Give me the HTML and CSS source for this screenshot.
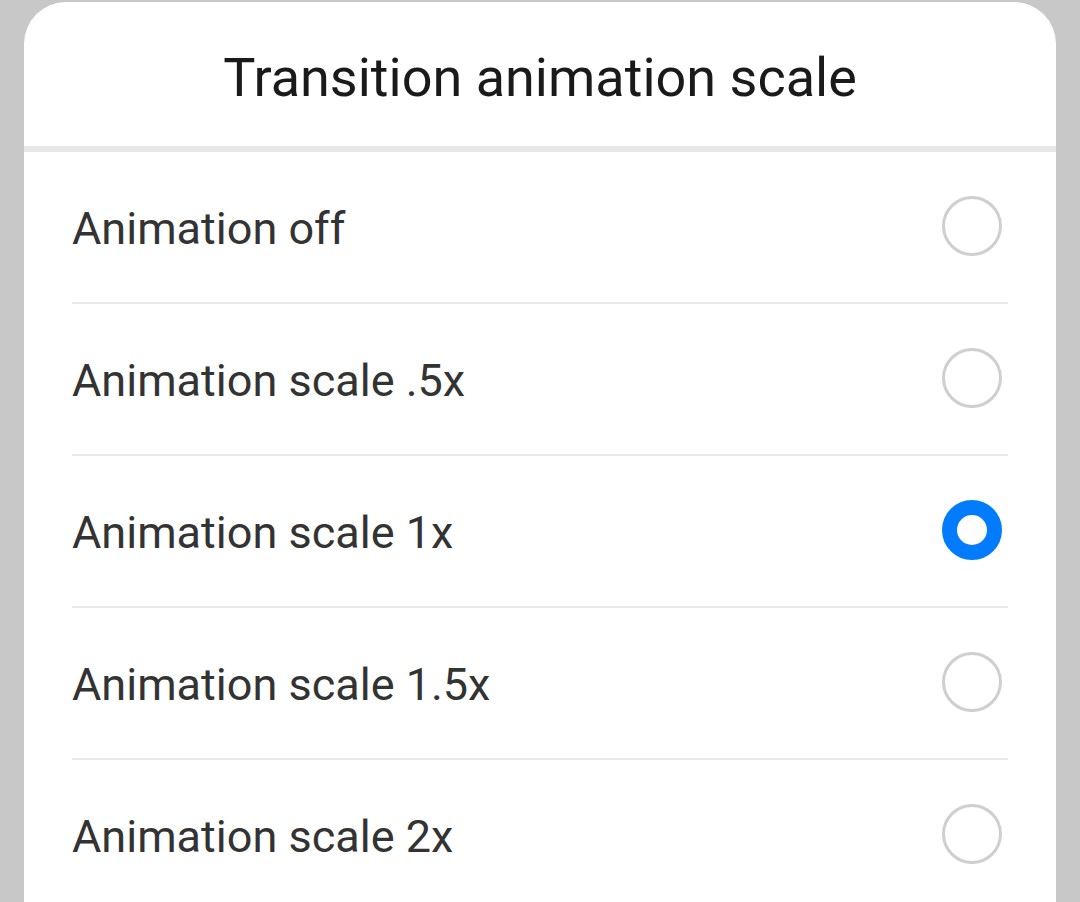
FILE: index.html
```html
<!DOCTYPE html>
<html lang="en">
<head>
<meta charset="utf-8">
<title>Transition animation scale</title>
<link rel="stylesheet" href="styles.css">
</head>
<body>
<div class="dialog">
  <div class="header"><h1 class="title">Transition animation scale</h1></div>
  <ul class="options">
    <li class="option"><span class="label">Animation off</span><span class="radio"></span></li>
    <li class="option"><span class="label">Animation scale .5x</span><span class="radio"></span></li>
    <li class="option"><span class="label">Animation scale 1x</span><span class="radio checked"></span></li>
    <li class="option"><span class="label">Animation scale 1.5x</span><span class="radio"></span></li>
    <li class="option"><span class="label">Animation scale 2x</span><span class="radio"></span></li>
  </ul>
</div>
</body>
</html>
```

FILE: styles.css
```css
html, body {
  margin: 0;
  padding: 0;
  height: 100%;
  overflow: hidden;
}
body {
  background: #c8c8c8;
  font-family: Roboto, "Noto Sans", sans-serif;
  padding: 2px 24px 0 24px;
  box-sizing: border-box;
}
.dialog {
  background: #ffffff;
  border-radius: 42px 42px 0 0;
  height: 1000px;
}
.header {
  height: 144px;
  display: flex;
  align-items: center;
  justify-content: center;
  border-bottom: 6px solid #e8e8e8;
}
.title {
  margin: 0;
  font-size: 54px;
  font-weight: 400;
  color: #1a1a1a;
  padding-top: 6px;
}
.options {
  list-style: none;
  margin: 0 48px;
  padding: 0;
}
.option {
  height: 150px;
  display: flex;
  align-items: center;
  justify-content: space-between;
  border-bottom: 2px solid #e9e9e9;
}
.label {
  font-size: 45px;
  color: #333333;
  padding-top: 3px;
}
.radio {
  width: 60px;
  height: 60px;
  box-sizing: border-box;
  border-radius: 50%;
  border: 3px solid #cfcfcf;
  margin-right: 6px;
  margin-top: -2px;
}
.radio.checked {
  border: 15px solid #037bfd;
}
```
